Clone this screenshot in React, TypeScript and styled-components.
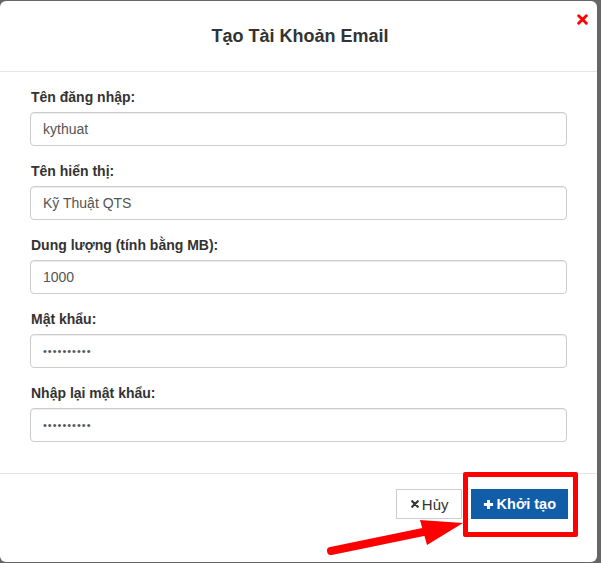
import React from 'react';
import styled, { createGlobalStyle } from 'styled-components';

const GlobalStyle = createGlobalStyle`
  html, body {
    margin: 0;
    padding: 0;
    background: #666;
    font-family: "Liberation Sans", Arial, sans-serif;
  }
`;

const Page = styled.div`
  width: 601px;
  height: 563px;
  padding-top: 1px;
  box-sizing: border-box;
  position: relative;
  overflow: hidden;
`;

const Modal = styled.div`
  width: 597px;
  height: 561px;
  background: #fff;
  border-radius: 6px;
  display: flex;
  flex-direction: column;
`;

const Header = styled.div`
  height: 70px;
  border-bottom: 1px solid #e5e5e5;
  display: flex;
  align-items: center;
  justify-content: center;
  position: relative;
`;

const Title = styled.h4`
  margin: 0;
  font-size: 18px;
  font-weight: bold;
  color: #333;
  padding-left: 3px;
`;

const Close = styled.button`
  position: absolute;
  top: 13px;
  right: 9px;
  border: 0;
  background: none;
  padding: 0;
  width: 11px;
  height: 11px;
  display: flex;
  cursor: pointer;
`;

const Body = styled.div`
  padding: 15px 30px 15px 30px;
`;

const Group = styled.div<{ last?: boolean }>`
  margin-bottom: ${(p) => (p.last ? '16px' : '15px')};
`;

const Label = styled.label`
  display: block;
  font-size: 14px;
  line-height: 20px;
  font-weight: bold;
  color: #333;
  margin-bottom: 5px;
  padding-left: 1px;
`;

const Input = styled.input<{ secret?: boolean }>`
  display: block;
  width: 100%;
  height: 34px;
  box-sizing: border-box;
  padding: 6px 12px;
  font-size: ${(p) => (p.secret ? '11px' : '14px')};
  letter-spacing: ${(p) => (p.secret ? '1px' : 'normal')};
  font-family: "Liberation Sans", Arial, sans-serif;
  color: #555;
  border: 1px solid #ccc;
  border-radius: 4px;
  box-shadow: inset 0 1px 1px rgba(0, 0, 0, 0.075);
  outline: none;
`;

const Footer = styled.div`
  border-top: 1px solid #e5e5e5;
  padding: 15px 29px 15px 15px;
  display: flex;
  justify-content: flex-end;
  gap: 9px;
`;

const Button = styled.button<{ primary?: boolean }>`
  height: 30px;
  padding: ${(p) => (p.primary ? '0 11px 0 11px' : '0 12px 0 14px')};
  display: flex;
  align-items: center;
  gap: 3px;
  font-size: ${(p) => (p.primary ? '14.5px' : '15px')};
  font-family: "Liberation Sans", Arial, sans-serif;
  font-weight: ${(p) => (p.primary ? 'bold' : 'normal')};
  color: ${(p) => (p.primary ? '#fff' : '#333')};
  background: ${(p) => (p.primary ? '#105ea8' : '#fff')};
  border: 1px solid ${(p) => (p.primary ? '#105ea8' : '#ccc')};
  border-radius: 0;
  cursor: pointer;
`;

const Highlight = styled.div`
  position: absolute;
  left: 463px;
  top: 472px;
  width: 115px;
  height: 65px;
  box-sizing: border-box;
  border: 5px solid #f00;
  border-radius: 2px;
  pointer-events: none;
`;

const Arrow = styled.svg`
  position: absolute;
  left: 0;
  top: 0;
  pointer-events: none;
`;

const TimesIcon = ({ size, color }: { size: number; color: string }) => (
  <svg width={size} height={size} viewBox="0 0 10 10">
    <path d="M1.5 1.5 L8.5 8.5 M8.5 1.5 L1.5 8.5" stroke={color} strokeWidth="2.6" strokeLinecap="round" />
  </svg>
);

const PlusIcon = () => (
  <svg width="11" height="11" viewBox="0 0 12 12">
    <path d="M6 1 V11 M1 6 H11" stroke="#fff" strokeWidth="3.2" />
  </svg>
);

const dots = '••••••••••';

const fields = [
  { label: 'Tên đăng nhập:', value: 'kythuat' },
  { label: 'Tên hiển thị:', value: 'Kỹ Thuật QTS' },
  { label: 'Dung lượng (tính bằng MB):', value: '1000' },
  { label: 'Mật khẩu:', value: dots, secret: true },
  { label: 'Nhập lại mật khẩu:', value: dots, secret: true },
];

export default function App() {
  return (
    <Page>
      <GlobalStyle />
      <Modal>
        <Header>
          <Title>Tạo Tài Khoản Email</Title>
          <Close aria-label="close">
            <TimesIcon size={11} color="#f00" />
          </Close>
        </Header>
        <Body>
          {fields.map((f, i) => (
            <Group key={f.label} last={i === fields.length - 1}>
              <Label>{f.label}</Label>
              <Input secret={f.secret} defaultValue={f.value} readOnly />
            </Group>
          ))}
        </Body>
        <Footer>
          <Button>
            <TimesIcon size={8} color="#333" />
            Hủy
          </Button>
          <Button primary>
            <PlusIcon />
            Khởi tạo
          </Button>
        </Footer>
      </Modal>
      <Highlight />
      <Arrow width="601" height="563">
        <line x1="331" y1="551" x2="428" y2="531" stroke="#f00" strokeWidth="8" strokeLinecap="round" />
        <polygon points="420,520 463,523 427,545" fill="#f00" />
      </Arrow>
    </Page>
  );
}
